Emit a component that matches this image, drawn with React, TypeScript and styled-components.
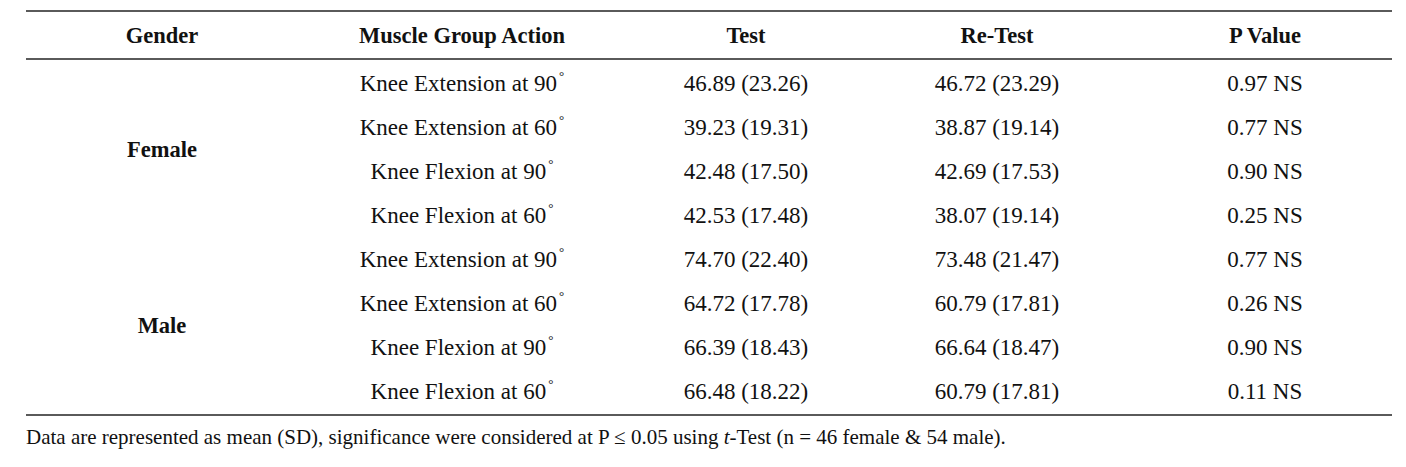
import React from "react";
import styled, { createGlobalStyle } from "styled-components";

const Global = createGlobalStyle`
  html, body { margin: 0; padding: 0; background: #fff; }
  body { font-family: "Liberation Serif", "Times New Roman", serif; color: #111; }
`;

const Page = styled.div`
  padding: 10px 14px 0 26px;
  width: 1366px;
`;

const Table = styled.div`
  display: grid;
  grid-template-columns: 272px 328px 240px 262px 264px;
  grid-template-rows: 48px repeat(8, 44px) 2px;
  border-top: 2px solid #5a5a5a;
  border-bottom: 2px solid #5a5a5a;
  font-size: 23px;
`;

const HeadCell = styled.div<{ $shift?: number }>`
  display: flex;
  align-items: center;
  justify-content: center;
  font-weight: bold;
  font-size: 22.5px;
  border-bottom: 2px solid #5a5a5a;
  padding-left: ${(p) => (p.$shift ?? 0) * 2}px;
  padding-top: 1px;
`;

const Cell = styled.div<{ $shift?: number }>`
  display: flex;
  align-items: center;
  justify-content: center;
  white-space: nowrap;
  padding-top: 3px;
  padding-left: ${(p) => (p.$shift ?? 0) * 2}px;
`;

const GroupCell = styled.div<{ $row: number }>`
  grid-column: 1;
  grid-row: ${(p) => p.$row} / span 4;
  display: flex;
  align-items: center;
  justify-content: center;
  font-weight: bold;
  font-size: 22.5px;
  padding-top: 3px;
`;

const Deg = styled.span`
  font-size: 13px;
  position: relative;
  top: -8px;
  margin-left: 2px;
`;

const Note = styled.p`
  margin: 9px 0 0 0;
  font-size: 21px;
  white-space: nowrap;
`;

type Row = { action: string; deg: string; test: string; retest: string; p: string };

const female: Row[] = [
  { action: "Knee Extension at", deg: "90", test: "46.89 (23.26)", retest: "46.72 (23.29)", p: "0.97 NS" },
  { action: "Knee Extension at", deg: "60", test: "39.23 (19.31)", retest: "38.87 (19.14)", p: "0.77 NS" },
  { action: "Knee Flexion at", deg: "90", test: "42.48 (17.50)", retest: "42.69 (17.53)", p: "0.90 NS" },
  { action: "Knee Flexion at", deg: "60", test: "42.53 (17.48)", retest: "38.07 (19.14)", p: "0.25 NS" },
];
const male: Row[] = [
  { action: "Knee Extension at", deg: "90", test: "74.70 (22.40)", retest: "73.48 (21.47)", p: "0.77 NS" },
  { action: "Knee Extension at", deg: "60", test: "64.72 (17.78)", retest: "60.79 (17.81)", p: "0.26 NS" },
  { action: "Knee Flexion at", deg: "90", test: "66.39 (18.43)", retest: "66.64 (18.47)", p: "0.90 NS" },
  { action: "Knee Flexion at", deg: "60", test: "66.48 (18.22)", retest: "60.79 (17.81)", p: "0.11 NS" },
];

const ActionCell = styled(Cell)`
  grid-column: 2;
`;

const DataRow = ({ r }: { r: Row }) => (
  <>
    <ActionCell>
      {r.action} {r.deg}
      <Deg>°</Deg>
    </ActionCell>
    <Cell>{r.test}</Cell>
    <Cell>{r.retest}</Cell>
    <Cell $shift={5}>{r.p}</Cell>
  </>
);

export default function App() {
  return (
    <Page>
      <Global />
      <Table>
        <HeadCell>Gender</HeadCell>
        <HeadCell>Muscle Group Action</HeadCell>
        <HeadCell>Test</HeadCell>
        <HeadCell>Re-Test</HeadCell>
        <HeadCell $shift={5}>P Value</HeadCell>
        <GroupCell $row={2}>Female</GroupCell>
        <GroupCell $row={6}>Male</GroupCell>
        {female.map((r, i) => (
          <DataRow key={"f" + i} r={r} />
        ))}
        {male.map((r, i) => (
          <DataRow key={"m" + i} r={r} />
        ))}
      </Table>
      <Note>
        Data are represented as mean (SD), significance were considered at P ≤ 0.05 using <i>t</i>-Test (n = 46
        female &amp; 54 male).
      </Note>
    </Page>
  );
}
